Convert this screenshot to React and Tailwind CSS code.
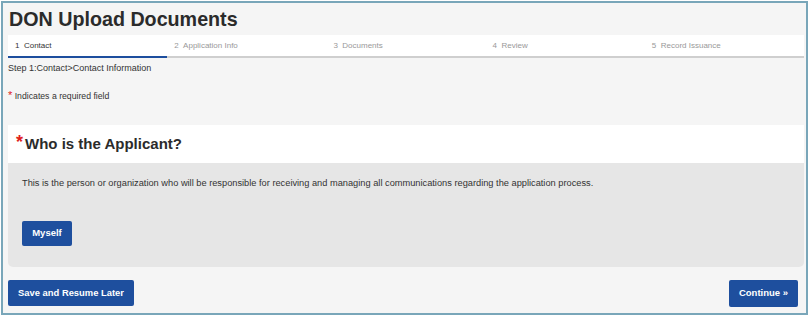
export default function App() {
  const steps = ['Contact', 'Application Info', 'Documents', 'Review', 'Record Issuance'];

  return (
    <div className="w-[811px] h-[318px] bg-white pl-px pt-px font-['Liberation_Sans',Arial,sans-serif] text-[#333]">
      <div className="w-[807px] h-[314px] border-2 border-[#79a6b9] bg-[#f5f5f5] pl-[5px] pr-[2px] flex flex-col">
        <h1 className="text-[19.7px] leading-[32px] font-bold text-[#2b2b2b] pl-px">DON Upload Documents</h1>

        <div className="flex bg-white h-[23px] border-b-2 border-[#cfcfcf]">
          {steps.map((s, i) => (
            <div
              key={s}
              className={
                i === 0
                  ? 'flex-1 pl-[7px] text-[8px] leading-[21px] text-[#333] border-b-2 border-[#1d4e9e] -mb-[2px]'
                  : 'flex-1 pl-[7px] text-[8px] leading-[21px] text-[#999]'
              }
            >
              {i + 1}&nbsp;&nbsp;{s}
            </div>
          ))}
        </div>

        <div className="text-[9px] leading-[20px]">Step 1:Contact&gt;Contact Information</div>
        <div className="text-[8.7px] leading-[16px] mt-[9px]">
          <span className="text-[#e0201b] text-[11px]">*</span> Indicates a required field
        </div>

        <div className="mt-[21px] bg-white h-[38px] flex items-center pl-[8px]">
          <span className="text-[#e0201b] text-[18px] font-bold leading-none mr-[2px] -mt-[4px]">*</span>
          <span className="text-[15px] font-bold text-[#2b2b2b]">Who is the Applicant?</span>
        </div>
        <div className="bg-[#e6e6e6] h-[104px] rounded-b-[5px] pl-[14px] pt-[13px]">
          <p className="text-[9.25px] leading-[14px]">
            This is the person or organization who will be responsible for receiving and managing all communications regarding the application process.
          </p>
          <button className="mt-[31px] bg-[#1e4f9e] text-white text-[9.5px] font-bold rounded-[2px] w-[50px] h-[25px]">
            Myself
          </button>
        </div>

        <div className="flex justify-between mt-[13px] pr-[6px]">
          <button className="bg-[#1e4f9e] text-white text-[9.4px] font-bold rounded-[2px] w-[126px] h-[26px]">
            Save and Resume Later
          </button>
          <button className="bg-[#1e4f9e] text-white text-[9.5px] font-bold rounded-[2px] w-[69px] h-[27px]">
            Continue »
          </button>
        </div>
      </div>
    </div>
  );
}
